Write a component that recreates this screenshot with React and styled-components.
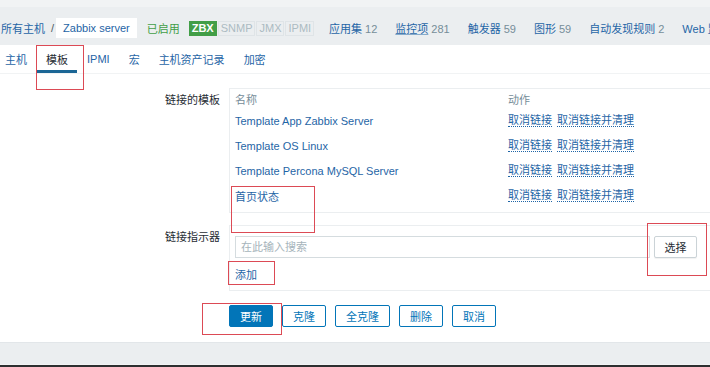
import React from 'react';
import styled, { createGlobalStyle, css } from 'styled-components';

const Global = createGlobalStyle`
  html, body { margin: 0; padding: 0; background: #fff; overflow: hidden; }
  body {
    font-family: "Liberation Sans", Arial, "Noto Sans CJK SC", sans-serif;
    font-size: 11px;
    color: #1f2c33;
  }
  #root { width: 710px; height: 367px; }
`;

const LINK = '#1f65a6';

const Page = styled.div`
  width: 710px;
  height: 367px;
  overflow: hidden;
  position: relative;
  display: flex;
  flex-direction: column;
`;

const Header = styled.div`
  flex: none;
  height: 45px;
  box-sizing: border-box;
  background: #ebeef0;
  border-top: 7px solid #f1f3f4;
  padding: 10px 0 6px 1px;
  display: flex;
  align-items: center;
  white-space: nowrap;
`;

const Crumb = styled.span`
  color: ${LINK};
`;

const Sep = styled.span`
  color: #4f5b62;
  margin: 0 2px 0 6px;
`;

const CurrentCrumb = styled.span`
  background: #fff;
  color: ${LINK};
  height: 20px;
  line-height: 20px;
  padding: 0 7px;
`;

const Status = styled.span`
  color: #429e47;
  margin-left: 10px;
`;

const BadgeGroup = styled.div`
  display: flex;
  gap: 1px;
  margin-left: 9px;
`;

const Badge = styled.span`
  height: 15px;
  box-sizing: border-box;
  line-height: 13px;
  padding: 0 2px;
  border: 1px solid ${p => (p.$on ? '#429e47' : '#dfe4e7')};
  background: ${p => (p.$on ? '#429e47' : 'transparent')};
  color: ${p => (p.$on ? '#fff' : '#acbbc2')};
  font-weight: ${p => (p.$on ? 'bold' : 'normal')};
`;

const NavItems = styled.div`
  display: flex;
  gap: 18px;
  margin-left: 15px;
`;

const NavItem = styled.span`
  color: ${LINK};
  ${p => p.$underline && css`
    text-decoration: underline;
    text-decoration-color: rgba(31, 101, 166, 0.5);
  `}
`;

const Count = styled.span`
  color: #768d99;
  margin-left: 3px;
`;

const TabBar = styled.div`
  flex: none;
  height: 28px;
  display: flex;
  gap: 19px;
  padding-left: 5px;
  border-bottom: 1px solid #f1f3f4;
  background: #fff;
`;

const Tab = styled.div`
  position: relative;
  display: flex;
  align-items: center;
  color: ${p => (p.$active ? '#1f2c33' : LINK)};
  ${p =>
    p.$active &&
    css`
      &::after {
        content: '';
        position: absolute;
        left: -9px;
        right: -9px;
        bottom: 0;
        height: 3px;
        background: #1b6695;
      }
    `}
`;

const Content = styled.div`
  flex: 1;
  background: #fff;
  padding-top: 14px;
  box-sizing: border-box;
`;

const Form = styled.div`
  display: grid;
  grid-template-columns: 220px 490px;
  column-gap: 9px;
`;

const Label = styled.div`
  text-align: right;
  padding-top: 5px;
  line-height: 14px;
  margin-top: ${p => p.$mt || 0}px;
`;

const Box = styled.div`
  border: 1px solid #ebeef0;
  border-right: none;
  padding: ${p => p.$pad};
  margin-top: ${p => p.$mt || 0}px;
  box-sizing: border-box;
`;

const TplTable = styled.div`
  display: grid;
  grid-template-columns: 273px auto;
  grid-auto-rows: 25px;
  align-items: center;
`;

const HeadCell = styled.div`
  color: #768d99;
  height: 15px;
  line-height: 15px;
`;

const HeadRow = styled.div`
  display: grid;
  grid-template-columns: 273px auto;
`;

const NameLink = styled.span`
  color: ${LINK};
`;

const Actions = styled.div`
  display: flex;
  gap: 5px;
`;

const ActionLink = styled.span`
  color: ${LINK};
  border-bottom: 1px dotted ${LINK};
  line-height: 12px;
`;

const InputRow = styled.div`
  display: flex;
  align-items: center;
  gap: 4px;
`;

const SearchInput = styled.input`
  width: 415px;
  height: 22px;
  box-sizing: border-box;
  border: 1px solid #d5dcdf;
  padding: 0 5px;
  font: inherit;
  color: #1f2c33;
  outline: none;
  &::placeholder { color: #a6b4bb; }
`;

const GreyButton = styled.button`
  width: 43px;
  height: 22px;
  box-sizing: border-box;
  border: 1px solid #cbd3d7;
  border-radius: 2px;
  background: #fff;
  color: #1f2c33;
  font: inherit;
  padding: 0;
  box-shadow: 0 1px 1px rgba(0, 0, 0, 0.06);
`;

const AddLink = styled.div`
  color: ${LINK};
  height: 18px;
  line-height: 18px;
  margin-top: 8px;
`;

const Buttons = styled.div`
  display: flex;
  gap: 9px;
  margin-top: 14px;
`;

const Button = styled.button`
  height: 22px;
  box-sizing: border-box;
  padding: 0 10px;
  border-radius: 2px;
  font: inherit;
  border: 1px solid #0275b8;
  background: ${p => (p.$primary ? '#0275b8' : '#fff')};
  color: ${p => (p.$primary ? '#fff' : '#0275b8')};
`;

const Footer = styled.div`
  flex: none;
  height: 23px;
  box-sizing: border-box;
  background: #ebeef0;
  border-top: 1px solid #e2e6e9;
  border-bottom: 1px solid #f3f4f5;
`;

const DarkStrip = styled.div`
  flex: none;
  height: 2px;
  background: #2d2f30;
`;

const Mark = styled.div`
  position: absolute;
  border: 1px solid #dc4a55;
  pointer-events: none;
`;

const marks = [
  { left: 36, top: 45, width: 46, height: 43 },
  { left: 231, top: 186, width: 82, height: 45 },
  { left: 647, top: 223, width: 58, height: 51 },
  { left: 228, top: 261, width: 45, height: 22 },
  { left: 202, top: 303, width: 78, height: 30 },
];

const templates = [
  'Template App Zabbix Server',
  'Template OS Linux',
  'Template Percona MySQL Server',
  '首页状态',
];

const navItems = [
  ['应用集', '12'],
  ['监控项', '281', true],
  ['触发器', '59'],
  ['图形', '59'],
  ['自动发现规则', '2'],
  ['Web 监测', ''],
];

export default function App() {
  return (
    <>
      <Global />
      <Page>
        <Header>
          <Crumb>所有主机</Crumb>
          <Sep>/</Sep>
          <CurrentCrumb>Zabbix server</CurrentCrumb>
          <Status>已启用</Status>
          <BadgeGroup>
            <Badge $on>ZBX</Badge>
            <Badge>SNMP</Badge>
            <Badge>JMX</Badge>
            <Badge>IPMI</Badge>
          </BadgeGroup>
          <NavItems>
            {navItems.map(([t, c, u]) => (
              <span key={t}>
                <NavItem $underline={u}>{t}</NavItem>
                {c && <Count>{c}</Count>}
              </span>
            ))}
          </NavItems>
        </Header>
        <TabBar>
          <Tab>主机</Tab>
          <Tab $active>模板</Tab>
          <Tab>IPMI</Tab>
          <Tab>宏</Tab>
          <Tab>主机资产记录</Tab>
          <Tab>加密</Tab>
        </TabBar>
        <Content>
          <Form>
            <Label>链接的模板</Label>
            <Box $pad="4px 5px">
              <HeadRow>
                <HeadCell>名称</HeadCell>
                <HeadCell>动作</HeadCell>
              </HeadRow>
              <TplTable>
                {templates.map(t => (
                  <React.Fragment key={t}>
                    <NameLink>{t}</NameLink>
                    <Actions>
                      <ActionLink>取消链接</ActionLink>
                      <ActionLink>取消链接并清理</ActionLink>
                    </Actions>
                  </React.Fragment>
                ))}
              </TplTable>
            </Box>
            <Label $mt={12}>链接指示器</Label>
            <Box $pad="10px 5px 6px" $mt={12}>
              <InputRow>
                <SearchInput placeholder="在此输入搜索" />
                <GreyButton>选择</GreyButton>
              </InputRow>
              <AddLink>添加</AddLink>
            </Box>
            <div />
            <Buttons>
              <Button $primary>更新</Button>
              <Button>克隆</Button>
              <Button>全克隆</Button>
              <Button>删除</Button>
              <Button>取消</Button>
            </Buttons>
          </Form>
        </Content>
        <Footer />
        <DarkStrip />
        {marks.map((m, i) => (
          <Mark key={i} style={m} />
        ))}
      </Page>
    </>
  );
}
